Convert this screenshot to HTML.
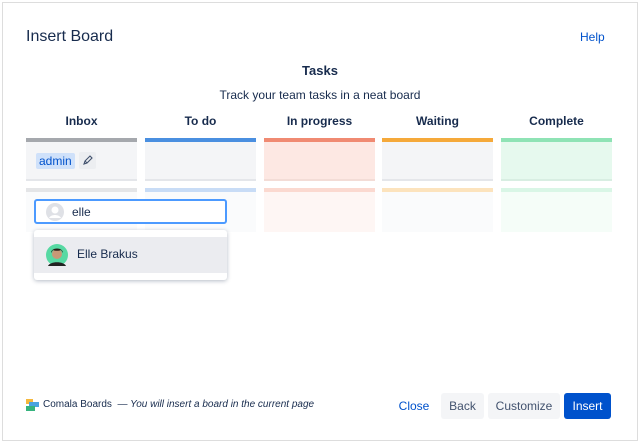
<!DOCTYPE html>
<html><head><meta charset="utf-8"><style>
*{box-sizing:border-box;margin:0;padding:0}
body{width:640px;height:443px;background:#fff;font-family:"Liberation Sans",sans-serif;color:#172b4d;position:relative;overflow:hidden}
.frame{position:absolute;left:2px;top:2px;width:636px;height:439px;border:1px solid #ddd}
.abs{position:absolute}
.h{font-weight:bold;font-size:12px;text-align:center;width:111px}
.bar{position:absolute;height:4px;width:111px}
.card{position:absolute;width:111px}
.btn{position:absolute;top:393px;height:26px;line-height:26px;font-size:12px;text-align:center;border-radius:3px}
</style></head><body>
<div class="frame"></div>
<div class="abs" style="left:26px;top:28px;font-size:16px">Insert Board</div>
<div class="abs" style="left:580px;top:30px;font-size:12px;color:#0052cc">Help</div>
<div class="abs" style="left:0;width:640px;top:63px;text-align:center;font-size:13px;font-weight:bold">Tasks</div>
<div class="abs" style="left:0;width:640px;top:88px;text-align:center;font-size:12px">Track your team tasks in a neat board</div>

<div class="abs h" style="left:26px;top:114px">Inbox</div>
<div class="abs h" style="left:145px;top:114px">To do</div>
<div class="abs h" style="left:264px;top:114px">In progress</div>
<div class="abs h" style="left:382px;top:114px">Waiting</div>
<div class="abs h" style="left:501px;top:114px">Complete</div>

<div class="bar" style="left:26px;top:138px;background:#a5a8ad"></div>
<div class="bar" style="left:145px;top:138px;background:#4a8fe0"></div>
<div class="bar" style="left:264px;top:138px;background:#f08a72"></div>
<div class="bar" style="left:382px;top:138px;background:#f5a93a"></div>
<div class="bar" style="left:501px;top:138px;background:#8fe3b5"></div>
<div class="card" style="left:26px;top:142px;height:39px;background:#f4f5f7;border-bottom:2px solid #e4e6ea"></div>
<div class="card" style="left:145px;top:142px;height:39px;background:#f4f5f7;border-bottom:2px solid #e4e6ea"></div>
<div class="card" style="left:264px;top:142px;height:39px;background:#fde8e3;border-bottom:2px solid #f3dcd6"></div>
<div class="card" style="left:382px;top:142px;height:39px;background:#f4f5f7;border-bottom:2px solid #e4e6ea"></div>
<div class="card" style="left:501px;top:142px;height:39px;background:#e6f9ee;border-bottom:2px solid #d8eee2"></div>

<div class="bar" style="left:26px;top:188px;background:#e4e5e7"></div>
<div class="bar" style="left:145px;top:188px;background:#c8dcf6"></div>
<div class="bar" style="left:264px;top:188px;background:#fbd9d0"></div>
<div class="bar" style="left:382px;top:188px;background:#fce3bd"></div>
<div class="bar" style="left:501px;top:188px;background:#d9f6e6"></div>
<div class="card" style="left:26px;top:192px;height:40px;background:#fafbfc"></div>
<div class="card" style="left:145px;top:192px;height:40px;background:#fafbfc"></div>
<div class="card" style="left:264px;top:192px;height:40px;background:#fef6f4"></div>
<div class="card" style="left:382px;top:192px;height:40px;background:#fafbfc"></div>
<div class="card" style="left:501px;top:192px;height:40px;background:#f5fdf8"></div>

<div class="abs" style="left:36px;top:153px;height:16px;line-height:16px;padding:0 3px;background:#cfe1fa;color:#0052cc;font-size:12px;border-radius:2px">admin</div>
<div class="abs" style="left:79px;top:152px;width:17px;height:17px;background:#eceef1;border-radius:2px">
<svg width="17" height="17" viewBox="0 0 17 17"><path d="M5 12l1-3 5-5 2 2-5 5z M6 9l2 2" stroke="#42526e" stroke-width="1.1" fill="none"/></svg></div>

<div class="abs" style="left:34px;top:199px;width:193px;height:25px;border:2px solid #4c9aff;border-radius:3px;background:#fff"></div>
<svg class="abs" style="left:45px;top:202px" width="20" height="20" viewBox="0 0 20 20"><circle cx="10" cy="10" r="9" fill="#dfe1e6"/><circle cx="10" cy="8" r="3.5" fill="#fff"/><path d="M4 16c2-4 10-4 12 0" fill="#fff"/></svg>
<div class="abs" style="left:72px;top:205px;font-size:12px">elle</div>

<div class="abs" style="left:34px;top:230px;width:193px;height:50px;background:#fff;border-radius:3px;box-shadow:0 1px 4px rgba(9,30,66,.3)"></div>
<div class="abs" style="left:34px;top:237px;width:193px;height:36px;background:#ebecf0"></div>
<svg class="abs" style="left:45px;top:242px" width="24" height="26" viewBox="0 0 24 26"><circle cx="12" cy="13" r="11" fill="#57d9a3"/><path d="M3 24c2-5 16-5 18 0z" fill="#222"/><circle cx="12" cy="12" r="5" fill="#c99877"/><path d="M6 11c0-6 12-6 12 0l-2-3c-2 1-6 1-8 0z" fill="#2a1e18"/></svg>
<div class="abs" style="left:77px;top:247px;font-size:12px">Elle Brakus</div>

<svg class="abs" style="left:26px;top:399px" width="13" height="12" viewBox="0 0 13 12"><rect x="0" y="0" width="7" height="5" fill="#f5b83d"/><rect x="3" y="3" width="10" height="5" fill="#4aa3df"/><rect x="0" y="7" width="9" height="5" fill="#36b37e"/></svg>
<div class="abs" style="left:43px;top:399px;font-size:10px;color:#172b4d">Comala Boards &nbsp;<i>— You will insert a board in the current page</i></div>

<div class="btn" style="left:394px;width:40px;color:#0052cc">Close</div>
<div class="btn" style="left:441px;width:43px;background:#f4f5f7;color:#42526e">Back</div>
<div class="btn" style="left:488px;width:72px;background:#f4f5f7;color:#42526e">Customize</div>
<div class="btn" style="left:564px;width:47px;background:#0052cc;color:#fff">Insert</div>
</body></html>
